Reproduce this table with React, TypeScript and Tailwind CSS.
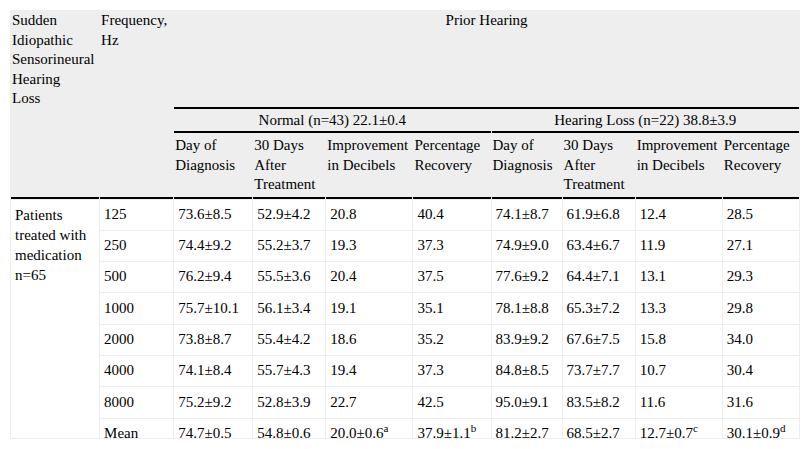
const NORMAL = [
  ["125", "73.6±8.5", "52.9±4.2", "20.8", "40.4"],
  ["250", "74.4±9.2", "55.2±3.7", "19.3", "37.3"],
  ["500", "76.2±9.4", "55.5±3.6", "20.4", "37.5"],
  ["1000", "75.7±10.1", "56.1±3.4", "19.1", "35.1"],
  ["2000", "73.8±8.7", "55.4±4.2", "18.6", "35.2"],
  ["4000", "74.1±8.4", "55.7±4.3", "19.4", "37.3"],
  ["8000", "75.2±9.2", "52.8±3.9", "22.7", "42.5"],
];

const LOSS = [
  ["74.1±8.7", "61.9±6.8", "12.4", "28.5"],
  ["74.9±9.0", "63.4±6.7", "11.9", "27.1"],
  ["77.6±9.2", "64.4±7.1", "13.1", "29.3"],
  ["78.1±8.8", "65.3±7.2", "13.3", "29.8"],
  ["83.9±9.2", "67.6±7.5", "15.8", "34.0"],
  ["84.8±8.5", "73.7±7.7", "10.7", "30.4"],
  ["95.0±9.1", "83.5±8.2", "11.6", "31.6"],
];

const WIDTHS = [88, 73, 78, 72, 86, 77, 70, 72, 86, 76];

const SUB = [
  "Day of Diagnosis",
  "30 Days After Treatment",
  "Improvement in Decibels",
  "Percentage Recovery",
];

const TD = "h-[30.3px] bg-white px-[4px] py-[5px] align-middle";
const TH = "px-[1px] align-top font-normal text-left";

function Sup({ children }: { children: string }) {
  return <sup className="text-[11px]">{children}</sup>;
}

export default function App() {
  return (
    <div
      className="bg-white pl-[10px] pt-[10px] text-[15px] leading-[19.5px] text-black"
      style={{ fontFamily: '"Liberation Serif", "Times New Roman", serif' }}
    >
      <div className="h-[429px] w-[790px] overflow-hidden border-b border-[#eeeeee] bg-[#eeeeee]">
        <table className="w-[790px] table-fixed border-separate border-spacing-[1px]">
          <colgroup>
            {WIDTHS.map((w, i) => (
              <col key={i} style={{ width: w }} />
            ))}
          </colgroup>
          <thead>
            <tr>
              <th className={TH}>
                Sudden
                <br />
                Idiopathic
                <br />
                Sensorineural
                <br />
                Hearing
                <br />
                Loss
              </th>
              <th className={TH}>
                Frequency,
                <br />
                Hz
              </th>
              <th colSpan={8} className="border-b-2 border-black px-[1px] text-center align-top font-normal">
                Prior Hearing
              </th>
            </tr>
            <tr>
              <th className={TH} />
              <th className={TH} />
              <th colSpan={4} className="border-b-2 border-black py-[1px] text-center align-top font-normal">
                Normal (n=43) 22.1±0.4
              </th>
              <th colSpan={4} className="border-b-2 border-black py-[1px] text-center align-top font-normal">
                Hearing Loss (n=22) 38.8±3.9
              </th>
            </tr>
            <tr>
              <th className={`${TH} border-b-2 border-black py-[2px]`} />
              <th className={`${TH} border-b-2 border-black py-[2px]`} />
              {[...SUB, ...SUB].map((s, i) => (
                <th key={i} className={`${TH} border-b-2 border-black py-[2px]`}>
                  {s}
                </th>
              ))}
            </tr>
          </thead>
          <tbody>
            {NORMAL.map((row, i) => (
              <tr key={row[0]}>
                {i === 0 && (
                  <td rowSpan={8} className="bg-white px-[4px] py-[5px] align-top leading-[20px]">
                    Patients treated with medication n=65
                  </td>
                )}
                {row.map((c, j) => (
                  <td key={j} className={TD}>
                    {c}
                  </td>
                ))}
                {LOSS[i].map((c, j) => (
                  <td key={j} className={TD}>
                    {c}
                  </td>
                ))}
              </tr>
            ))}
            <tr>
              <td className={TD}>Mean</td>
              <td className={TD}>74.7±0.5</td>
              <td className={TD}>54.8±0.6</td>
              <td className={TD}>
                20.0±0.6<Sup>a</Sup>
              </td>
              <td className={TD}>
                37.9±1.1<Sup>b</Sup>
              </td>
              <td className={TD}>81.2±2.7</td>
              <td className={TD}>68.5±2.7</td>
              <td className={TD}>
                12.7±0.7<Sup>c</Sup>
              </td>
              <td className={TD}>
                30.1±0.9<Sup>d</Sup>
              </td>
            </tr>
          </tbody>
        </table>
      </div>
    </div>
  );
}
